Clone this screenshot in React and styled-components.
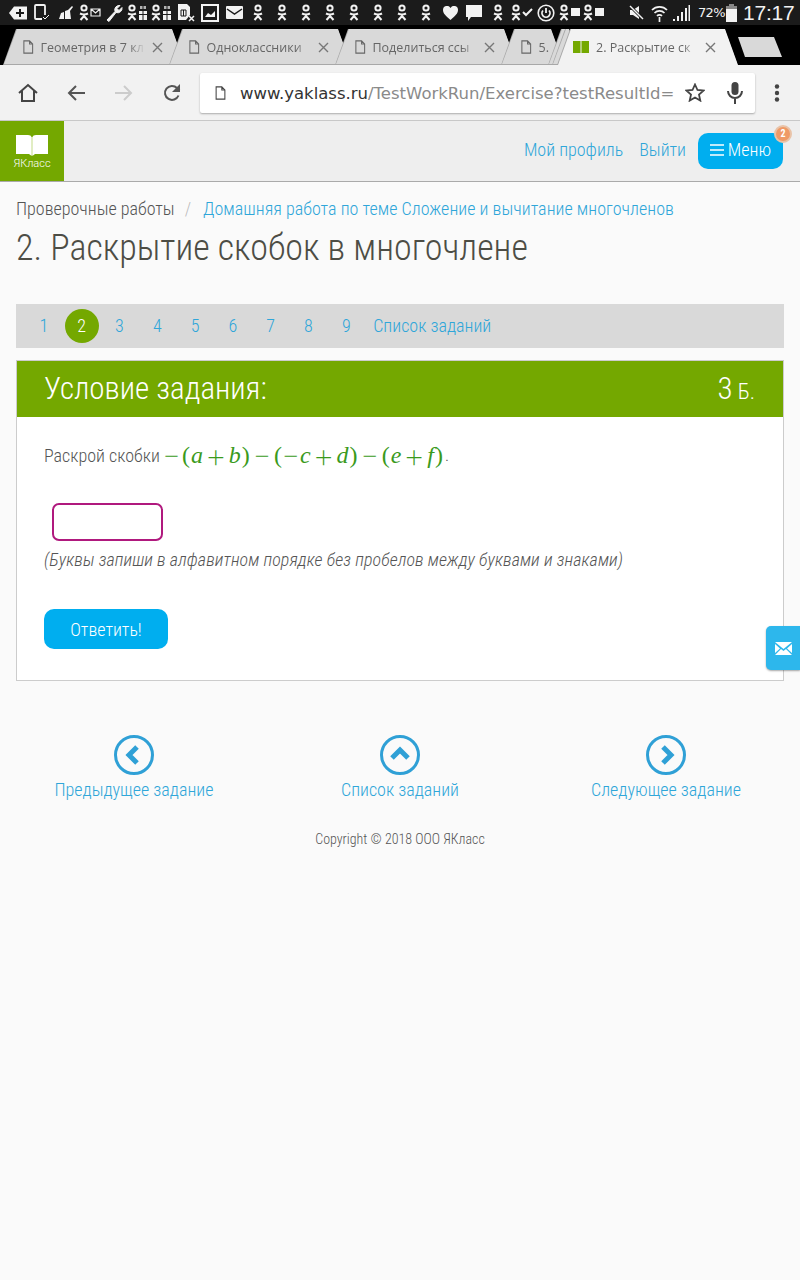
import React from "react";
import styled, { createGlobalStyle } from "styled-components";

const Global = createGlobalStyle`
  html, body { margin: 0; padding: 0; background: #fafafa; }
  body { font-family: Roboto, "Liberation Sans", sans-serif; font-weight: 300; color: #555; }
  * { box-sizing: border-box; }
`;

const Screen = styled.div`
  width: 800px;
  height: 1280px;
  overflow: hidden;
  position: relative;
  background: #fafafa;
`;

/* ---- android status bar ---- */
const StatusBar = styled.div`
  height: 25px;
  background: #1b1b1b;
  display: flex;
  align-items: center;
  padding-left: 6px;
  color: #f2f2f2;
`;
const Slot = styled.div`
  width: ${(p) => p.$w || 24}px;
  flex: none;
  display: flex;
  justify-content: center;
  align-items: center;
`;
const StatusRight = styled.div`
  margin-left: 19px;
  display: flex;
  align-items: center;
`;
const Percent = styled.span`
  font-family: "DejaVu Sans", sans-serif;
  font-size: 13px;
  font-weight: 400;
  letter-spacing: -0.6px;
  width: 33px;
  text-align: right;
`;
const Clock = styled.span`
  font-family: "Liberation Sans", sans-serif;
  font-size: 21px;
  font-weight: 400;
  letter-spacing: -0.2px;
  margin-left: 6px;
`;

const Ok = ({ extra }) => (
  <svg width={extra ? 22 : 10} height="17" viewBox={extra ? "0 0 22 17" : "0 0 10 17"} fill="none" stroke="#f2f2f2">
    <circle cx="5" cy="4" r="2.6" strokeWidth="2" />
    <path d="M1 9.5q4 2 8 0M5 10.5v1.5M1.5 16L5 12l3.5 4" strokeWidth="2" />
    {extra === "mail" && <path d="M12 5h9v7h-9zM12 5l4.500 4 4.500-4" strokeWidth="1.2" />}
    {extra === "msg" && <path d="M12 4h9v8h-9z" fill="#f2f2f2" stroke="none" />}
    {extra === "check" && <path d="M12 8l3 3 6-6" strokeWidth="2" />}
    {extra === "gift" && (
      <g fill="#f2f2f2" stroke="none">
        <path d="M12 7h3.500v3H12zM16.500 7H20v3h-3.500zM12 11h3.500v5H12zM16.500 11H20v5h-3.500z" />
        <path d="M13 2h2.500v3H13zM16.500 2H19v3h-2.500z" opacity=".7" />
      </g>
    )}
  </svg>
);

const Glyph = ({ w = 18, h = 18, children }) => (
  <svg width={w} height={h} viewBox={`0 0 ${w} ${h}`} fill="none" stroke="#f2f2f2">
    {children}
  </svg>
);

const statusIcons = [
  <Glyph key="a" w={18} h={14}>
    <path d="M0 7l5-6.500h13v13H5z" fill="#f2f2f2" stroke="none" />
    <path d="M7 7h8M11 3v8" stroke="#1b1b1b" strokeWidth="2" />
  </Glyph>,
  <Glyph key="b" w={17} h={17}>
    <path d="M8 15H2a1 1 0 0 1-1-1V2a1 1 0 0 1 1-1h8a1 1 0 0 1 1 1v9" strokeWidth="1.800" />
    <path d="M9 13l2 2 4-4" strokeWidth="1" />
  </Glyph>,
  <Glyph key="c" w={14} h={15}>
    <path d="M0 14l2-6 3-1v7zM6 14V6l3-1 4-4 1 1-3 4 1 8z" fill="#f2f2f2" stroke="none" />
  </Glyph>,
  <Ok key="d" extra="mail" />,
  <Glyph key="e" w={18} h={18}>
    <path d="M2 16L10 7.500a4.500 4.500 0 0 1 5-6l-3 3 2 2 3-3a4.500 4.500 0 0 1-6 5L4 17.500z" fill="#f2f2f2" stroke="#f2f2f2" />
  </Glyph>,
  <Ok key="f" extra="gift" />,
  <Ok key="g" extra="gift" />,
  <Glyph key="h" w={18} h={19}>
    <path d="M1 1h9l3 3v8l-4 5H1z" fill="#f2f2f2" stroke="none" />
    <path d="M4 7h5v6H4zM6.500 7v6" stroke="#1b1b1b" />
    <path d="M12 13l5 5M17 13l-5 5" strokeWidth="1.500" />
  </Glyph>,
  <Glyph key="i" w={18} h={18}>
    <rect x="1" y="1" width="16" height="16" strokeWidth="2" />
    <path d="M4 13l3-4 3 2 4-4v6z" fill="#f2f2f2" stroke="none" />
  </Glyph>,
  <Glyph key="j" w={17} h={13}>
    <path d="M1 0h15a1 1 0 0 1 1 1v11a1 1 0 0 1-1 1H1a1 1 0 0 1-1-1V1a1 1 0 0 1 1-1z" fill="#f2f2f2" stroke="none" />
    <path d="M1 3l7.500 5L16 3" stroke="#1b1b1b" strokeWidth="1.500" />
  </Glyph>,
  ...[0, 1, 2, 3, 4, 5, 6, 7].map((i) => <Ok key={"ok" + i} />),
  <Glyph key="k" w={15} h={14}>
    <path d="M7.500 14C3 10 0 7.500 0 4a4 4 0 0 1 7.500-2A4 4 0 0 1 15 4c0 3.500-3 6-7.500 10z" fill="#f2f2f2" stroke="none" />
  </Glyph>,
  <Glyph key="l" w={16} h={16}>
    <path d="M0 0h16v12H5l-3 4v-4H0z" fill="#f2f2f2" stroke="none" />
  </Glyph>,
  <Ok key="m" />,
  <Ok key="n" extra="check" />,
  <Glyph key="o" w={18} h={18}>
    <circle cx="9" cy="9" r="7.800" strokeWidth="1.600" />
    <path d="M6 6.500a4 4 0 1 0 6 0M9 4v5" strokeWidth="1.800" />
  </Glyph>,
  <Ok key="p" extra="msg" />,
  <Ok key="q" extra="msg" />,
];

/* ---- browser tabs ---- */
const TabStrip = styled.div`
  height: 40px;
  background: #000;
  display: flex;
  align-items: flex-end;
  padding-left: 3px;
`;
const Tab = styled.div`
  position: relative;
  width: ${(p) => p.$w}px;
  height: 36px;
  margin-right: ${(p) => p.$after ?? -16}px;
  flex: none;
  display: flex;
  align-items: center;
  padding: 0 0 0 ${(p) => (p.$active ? 16 : 20)}px;
  background: #a8a8a8;
  clip-path: polygon(13px 0, calc(100% - 13px) 0, 100% 100%, 0 100%);
  color: #666;
  font-family: "Open Sans", sans-serif;
  font-weight: 400;
  font-size: 12.500px;
  white-space: nowrap;

  &::before {
    content: "";
    position: absolute;
    inset: 0 0 ${(p) => (p.$active ? 0 : 1)}px 1px;
    background: ${(p) => (p.$active ? "#f2f2f2" : "#d9d9d9")};
    clip-path: polygon(13px 0, calc(100% - 13px) 0, 100% 100%, 0 100%);
  }
`;
const TabTitle = styled.span`
  position: relative;
  width: ${(p) => p.$w}px;
  margin-left: 7px;
  overflow: hidden;
  -webkit-mask-image: linear-gradient(90deg, #000 85%, transparent);
  mask-image: linear-gradient(90deg, #000 85%, transparent);
`;
const TabClose = styled.span`
  position: relative;
  margin-left: 7px;
  display: flex;
`;
const NewTab = styled.div`
  width: 44px;
  height: 20px;
  margin: 0 0 8px 0;
  background: #d9d9d9;
  clip-path: polygon(0 0, 36px 0, 100% 100%, 7px 100%);
`;

const FileIcon = ({ size = 14 }) => (
  <svg width={size * 0.75} height={size} viewBox="0 0 12 16" fill="none" stroke="#666" strokeWidth="1.200" style={{ position: "relative", flex: "none" }}>
    <path d="M1 1h6.500L11 4.500V15H1zM7.500 1v3.500H11" />
  </svg>
);
const CloseX = () => (
  <svg width="11" height="11" viewBox="0 0 11 11" stroke="#777" strokeWidth="1.400">
    <path d="M1 1l9 9M10 1l-9 9" />
  </svg>
);

/* ---- browser toolbar ---- */
const Toolbar = styled.div`
  height: 56px;
  background: #f2f2f2;
  border-bottom: 1px solid #c8c8c8;
  display: flex;
  align-items: center;
  padding-left: 4px;
`;
const ToolBtn = styled.div`
  width: ${(p) => p.$w || 48}px;
  flex: none;
  display: flex;
  justify-content: center;
`;
const Omnibox = styled.div`
  width: 555px;
  height: 40px;
  margin: 0 0 0 4px;
  background: #fff;
  border-radius: 2px;
  box-shadow: 0 1px 2px rgba(0, 0, 0, 0.3);
  display: flex;
  align-items: center;
  padding-left: 15px;
  flex: none;
`;
const Url = styled.div`
  margin-left: 14px;
  padding-top: 2px;
  width: 435px;
  font-family: "DejaVu Sans", sans-serif;
  font-weight: 400;
  font-size: 16.500px;
  color: #8a8a8a;
  white-space: nowrap;
  b { font-weight: 400; color: #333; }
`;
const OmniIcon = styled.div`
  width: 40px;
  flex: none;
  display: flex;
  justify-content: center;
`;

/* ---- site header ---- */
const SiteHeader = styled.header`
  height: 61px;
  background: #eee;
  border-bottom: 1px solid #aaa;
  display: flex;
  align-items: stretch;
`;
const Logo = styled.div`
  width: 64px;
  background: #74a800;
  color: #fff;
  display: flex;
  flex-direction: column;
  align-items: center;
  padding-top: 14px;
  font-size: 11px;
  line-height: 13px;
  font-weight: 300;
`;
const HeaderNav = styled.nav`
  margin-left: auto;
  padding: 0 17px 3px 0;
  display: flex;
  align-items: center;
  gap: 16px;
  font-size: 18px;
  font-stretch: 87%;
  color: #2fa6d9;
`;
const MenuBtn = styled.div`
  position: relative;
  margin: 2px 0 0 -4px;
  width: 85px;
  height: 36px;
  padding-bottom: 2px;
  background: #00aeef;
  color: #fff;
  border-radius: 10px;
  display: flex;
  align-items: center;
  justify-content: center;
  gap: 4px;
`;
const Badge = styled.span`
  position: absolute;
  top: -8px;
  right: -9px;
  width: 18px;
  height: 18px;
  border-radius: 50%;
  background: #ef9a66;
  border: 2px solid #e9c3a8;
  color: #fff;
  font-size: 10px;
  font-weight: 700;
  display: flex;
  align-items: center;
  justify-content: center;
`;

/* ---- page ---- */
const Main = styled.main`
  padding: 0 16px;
`;
const Crumbs = styled.div`
  margin-top: 15px;
  height: 22px;
  display: flex;
  align-items: center;
  font-size: 18px;
  font-stretch: 87%;
  color: #555;
  white-space: nowrap;
`;
const Sep = styled.span`
  color: #bbb;
  margin: 0 12px 0 10px;
`;
const Link = styled.span`
  color: #2fa6d9;
  letter-spacing: 0.03px;
`;
const Title = styled.h1`
  margin: 9px 0 0;
  height: 40px;
  font-size: 36px;
  font-stretch: 87%;
  line-height: 40px;
  font-weight: 300;
  color: #4d4d45;
`;
const Pager = styled.div`
  margin-top: 36px;
  height: 44px;
  background: #d9d9d9;
  display: flex;
  align-items: center;
  padding-left: 9px;
  font-size: 18px;
  font-stretch: 87%;
  color: #2fa6d9;
`;
const Page = styled.span`
  width: 37.800px;
  height: 34px;
  padding-bottom: ${(p) => (p.$holder ? 0 : 2)}px;
  display: flex;
  align-items: center;
  justify-content: center;
  flex: none;
`;
const Current = styled.span`
  width: 34px;
  height: 34px;
  padding-bottom: 2px;
  border-radius: 50%;
  background: #74a800;
  color: #fff;
  display: flex;
  align-items: center;
  justify-content: center;
`;
const PagerLink = styled.span`
  margin: 0 0 2px 8px;
`;
const Card = styled.section`
  margin-top: 12px;
  height: 321px;
  background: #fff;
  border: 1px solid #ccc;
`;
const CardHead = styled.div`
  height: 56px;
  background: #74a800;
  color: #fff;
  display: flex;
  align-items: center;
  justify-content: space-between;
  padding: 0 28px 2px 27px;
  font-size: 31px;
  font-stretch: 87%;
`;
const Score = styled.span`
  display: flex;
  align-items: baseline;
  gap: 5px;
  small { font-size: 22px; }
`;
const CardBody = styled.div`
  padding: 24px 27px 0;
`;
const Question = styled.div`
  height: 28px;
  display: flex;
  align-items: center;
  font-size: 18px;
  font-stretch: 87%;
  color: #555;
`;
const Formula = styled.span`
  margin-left: 1px;
  font-family: "Liberation Serif", serif;
  font-size: 24px;
  font-stretch: normal;
  font-weight: 400;
  color: #3a9a1c;
  white-space: pre;
  i { font-style: italic; margin: 0 1px; }
`;
const Op = styled.span`
  font-family: Roboto, sans-serif;
  font-weight: 200;
  font-size: 30px;
  line-height: 0;
  vertical-align: -4px;
  margin: 0 ${(p) => p.$gap ?? 3.500}px;
`;
const Dot = styled.span`
  font-size: 17px;
  color: #555;
  margin-left: 2px;
`;
const Answer = styled.div`
  margin: 34px 0 0 8px;
  width: 111px;
  height: 38px;
  border: 2px solid #b0197e;
  border-radius: 7px;
  background: #fff;
`;
const Hint = styled.div`
  margin-top: 8px;
  height: 22px;
  line-height: 22px;
  font-size: 18px;
  font-stretch: 87%;
  font-style: italic;
  letter-spacing: 0.07px;
  color: #555;
`;
const Submit = styled.div`
  margin-top: 38px;
  width: 124px;
  height: 40px;
  border-radius: 10px;
  background: #00aeef;
  color: #fff;
  font-size: 18px;
  font-stretch: 87%;
  display: flex;
  align-items: center;
  justify-content: center;
`;
const Feedback = styled.div`
  position: absolute;
  top: 626px;
  right: 0;
  width: 34px;
  height: 44px;
  background: #2db7ec;
  border-radius: 5px 0 0 5px;
  box-shadow: 0 1px 2px rgba(0, 0, 0, 0.35);
  display: flex;
  align-items: center;
  justify-content: center;
`;
const BottomNav = styled.div`
  margin-top: 54px;
  display: grid;
  grid-template-columns: repeat(3, 266px);
  justify-content: center;
`;
const NavItem = styled.div`
  display: flex;
  flex-direction: column;
  align-items: center;
  gap: 3px;
  font-size: 18px;
  font-stretch: 87%;
  color: #2fa6d9;
  line-height: 24px;
`;
const Copyright = styled.div`
  margin-top: 29px;
  text-align: center;
  font-size: 14px;
  font-stretch: 80%;
  color: #555;
`;

const NavCircle = ({ d }) => (
  <svg width="40" height="40" viewBox="0 0 40 40" fill="none" stroke="#2fa0d6">
    <circle cx="20" cy="20" r="18.500" strokeWidth="3" />
    <path d={d} strokeWidth="5" />
  </svg>
);

const tabs = [
  { title: "Геометрия в 7 кл", w: 182, tw: 104 },
  { title: "Одноклассники", w: 182, tw: 104 },
  { title: "Поделиться ссы", w: 182, tw: 104 },
];

export default function App() {
  return (
    <Screen>
      <Global />
      <StatusBar>
        {statusIcons.map((icon, i) => (
          <Slot key={i}>{icon}</Slot>
        ))}
        <StatusRight>
          <Slot $w={22}>
            <Glyph w={15} h={15}>
              <path d="M1 5h3l6-4v13l-6-4H1z" fill="#f2f2f2" stroke="none" />
              <path d="M1 1l13 13" stroke="#1b1b1b" strokeWidth="3" />
              <path d="M1 1l13 13" strokeWidth="1.400" />
            </Glyph>
          </Slot>
          <Slot $w={24}>
            <Glyph w={17} h={18}>
              <path d="M1 6a10.500 10.500 0 0 1 15 0M3.500 9a7 7 0 0 1 10 0M6 12a3.500 3.500 0 0 1 5 0M8.500 13v5" strokeWidth="1.700" />
            </Glyph>
          </Slot>
          <Slot $w={21}>
            <Glyph w={17} h={16}>
              <path d="M0 14h2v2H0zM4 11h2v5H4zM8 7h2v9H8zM12 3h2v13h-2zM15.500 0h1.500v16h-1.500z" fill="#f2f2f2" stroke="none" />
            </Glyph>
          </Slot>
          <Percent>72%</Percent>
          <Slot $w={12}>
            <Glyph w={11} h={18}>
              <path d="M3 0h5v2H3z" fill="#888" stroke="none" />
              <path d="M0 2h11v4H0z" fill="#888" stroke="none" />
              <path d="M0 5h11v13H0z" fill="#f2f2f2" stroke="none" />
            </Glyph>
          </Slot>
          <Clock>17:17</Clock>
        </StatusRight>
      </StatusBar>

      <TabStrip>
        {tabs.map((t) => (
          <Tab key={t.title} $w={t.w}>
            <FileIcon />
            <TabTitle $w={t.tw}>{t.title}</TabTitle>
            <TabClose>
              <CloseX />
            </TabClose>
          </Tab>
        ))}
        <Tab $w={63}>
          <FileIcon />
          <TabTitle $w={14}>5.</TabTitle>
        </Tab>
        <Tab $w={30} $after={-26} />
        <Tab $w={30} $after={-25} />
        <Tab $w={181} $active $after={0}>
          <svg width="16" height="12" viewBox="0 0 16 12" style={{ position: "relative", flex: "none" }}>
            <path d="M0 0h7.500v12H0zM8.500 0H16v12H8.500z" fill="#74a800" />
          </svg>
          <TabTitle $w={102}>2. Раскрытие ск</TabTitle>
          <TabClose>
            <CloseX />
          </TabClose>
        </Tab>
        <NewTab />
      </TabStrip>

      <Toolbar>
        <ToolBtn>
          <svg width="20" height="20" viewBox="0 0 20 20" fill="none" stroke="#444" strokeWidth="2">
            <path d="M1 10l9-8 9 8M4 8v10h12V8" />
          </svg>
        </ToolBtn>
        <ToolBtn>
          <svg width="18" height="16" viewBox="0 0 18 16" fill="none" stroke="#555" strokeWidth="2">
            <path d="M18 8H2M9 1L2 8l7 7" />
          </svg>
        </ToolBtn>
        <ToolBtn>
          <svg width="18" height="16" viewBox="0 0 18 16" fill="none" stroke="#ccc" strokeWidth="2">
            <path d="M0 8h16M9 1l7 7-7 7" />
          </svg>
        </ToolBtn>
        <ToolBtn>
          <svg width="18" height="18" viewBox="0 0 18 18" fill="none" stroke="#555" strokeWidth="2">
            <path d="M15.500 11.500A7 7 0 1 1 14 4l2.500 2.500" />
            <path d="M17 0v8h-8z" fill="#555" stroke="none" />
          </svg>
        </ToolBtn>
        <Omnibox>
          <svg width="11" height="14" viewBox="0 0 12 16" fill="none" stroke="#444" strokeWidth="1.200">
            <path d="M1 1h6.500L11 4.500V15H1zM7.500 1v3.500H11" />
          </svg>
          <Url>
            <b>www.yaklass.ru</b>/TestWorkRun/Exercise?testResultId=
          </Url>
          <OmniIcon>
            <svg width="20" height="19" viewBox="0 0 20 19" fill="none" stroke="#444" strokeWidth="1.800">
              <path d="M10 1.500l2.500 5.500 6 .6-4.500 4 1.300 6L10 14.500 4.700 17.600l1.300-6-4.500-4 6-.6z" />
            </svg>
          </OmniIcon>
          <OmniIcon>
            <svg width="16" height="22" viewBox="0 0 16 22" fill="none" stroke="#444" strokeWidth="2">
              <rect x="4.500" y="0" width="7" height="13" rx="3.500" fill="#444" stroke="none" />
              <path d="M1 9a7 7 0 0 0 14 0M8 16v6" />
            </svg>
          </OmniIcon>
        </Omnibox>
        <ToolBtn $w={44}>
          <svg width="6" height="18" viewBox="0 0 6 18" fill="#444">
            <circle cx="3" cy="2.500" r="2.200" />
            <circle cx="3" cy="9" r="2.200" />
            <circle cx="3" cy="15.500" r="2.200" />
          </svg>
        </ToolBtn>
      </Toolbar>

      <SiteHeader>
        <Logo>
          <svg width="32" height="22" viewBox="0 0 32 22" fill="#fff">
            <path d="M0 0h12q3 0 3.600 2h.8q.6-2 3.600-2h12v19H19l-2 1.500h-2L13 19H0z" />
            <path d="M16 2v18" stroke="#a9cc55" strokeWidth=".7" />
          </svg>
          ЯКласс
        </Logo>
        <HeaderNav>
          <span>Мой профиль</span>
          <span>Выйти</span>
          <MenuBtn>
            <svg width="14" height="12" viewBox="0 0 14 12" stroke="#fff" strokeWidth="1.600">
              <path d="M0 1h14M0 6h14M0 11h14" />
            </svg>
            Меню
            <Badge>2</Badge>
          </MenuBtn>
        </HeaderNav>
      </SiteHeader>

      <Main>
        <Crumbs>
          Проверочные работы
          <Sep>/</Sep>
          <Link>Домашняя работа по теме Сложение и вычитание многочленов</Link>
        </Crumbs>
        <Title>2. Раскрытие скобок в многочлене</Title>

        <Pager>
          <Page>1</Page>
          <Page $holder>
            <Current>2</Current>
          </Page>
          {[3, 4, 5, 6, 7, 8, 9].map((n) => (
            <Page key={n}>{n}</Page>
          ))}
          <PagerLink>Список заданий</PagerLink>
        </Pager>

        <Card>
          <CardHead>
            <span>Условие задания:</span>
            <Score>
              <span>3</span>
              <small>Б.</small>
            </Score>
          </CardHead>
          <CardBody>
            <Question>
              Раскрой скобки
              <Formula>
                <Op $gap={2}>−</Op>(<i>a</i>
                <Op>+</Op>
                <i>b</i>)<Op>−</Op>(<Op $gap={0}>−</Op>
                <i>c</i>
                <Op>+</Op>
                <i>d</i>)<Op>−</Op>(<i>e</i>
                <Op>+</Op>
                <i>f</i>)
              </Formula>
              <Dot>.</Dot>
            </Question>
            <Answer />
            <Hint>(Буквы запиши в алфавитном порядке без пробелов между буквами и знаками)</Hint>
            <Submit>Ответить!</Submit>
          </CardBody>
        </Card>

        <BottomNav>
          <NavItem>
            <NavCircle d="M23 12l-8 8 8 8" />
            Предыдущее задание
          </NavItem>
          <NavItem>
            <NavCircle d="M12 23l8-8 8 8" />
            Список заданий
          </NavItem>
          <NavItem>
            <NavCircle d="M17 12l8 8-8 8" />
            Следующее задание
          </NavItem>
        </BottomNav>
        <Copyright>Copyright © 2018 ООО ЯКласс</Copyright>
      </Main>

      <Feedback>
        <svg width="17" height="13" viewBox="0 0 17 13">
          <path d="M0 0h17L8.500 7z" fill="#fff" />
          <path d="M0 2l5 4.500L0 11zM17 2l-5 4.500 5 4.500zM0 13l6-6 2.500 2 2.500-2 6 6z" fill="#fff" />
        </svg>
      </Feedback>
    </Screen>
  );
}
